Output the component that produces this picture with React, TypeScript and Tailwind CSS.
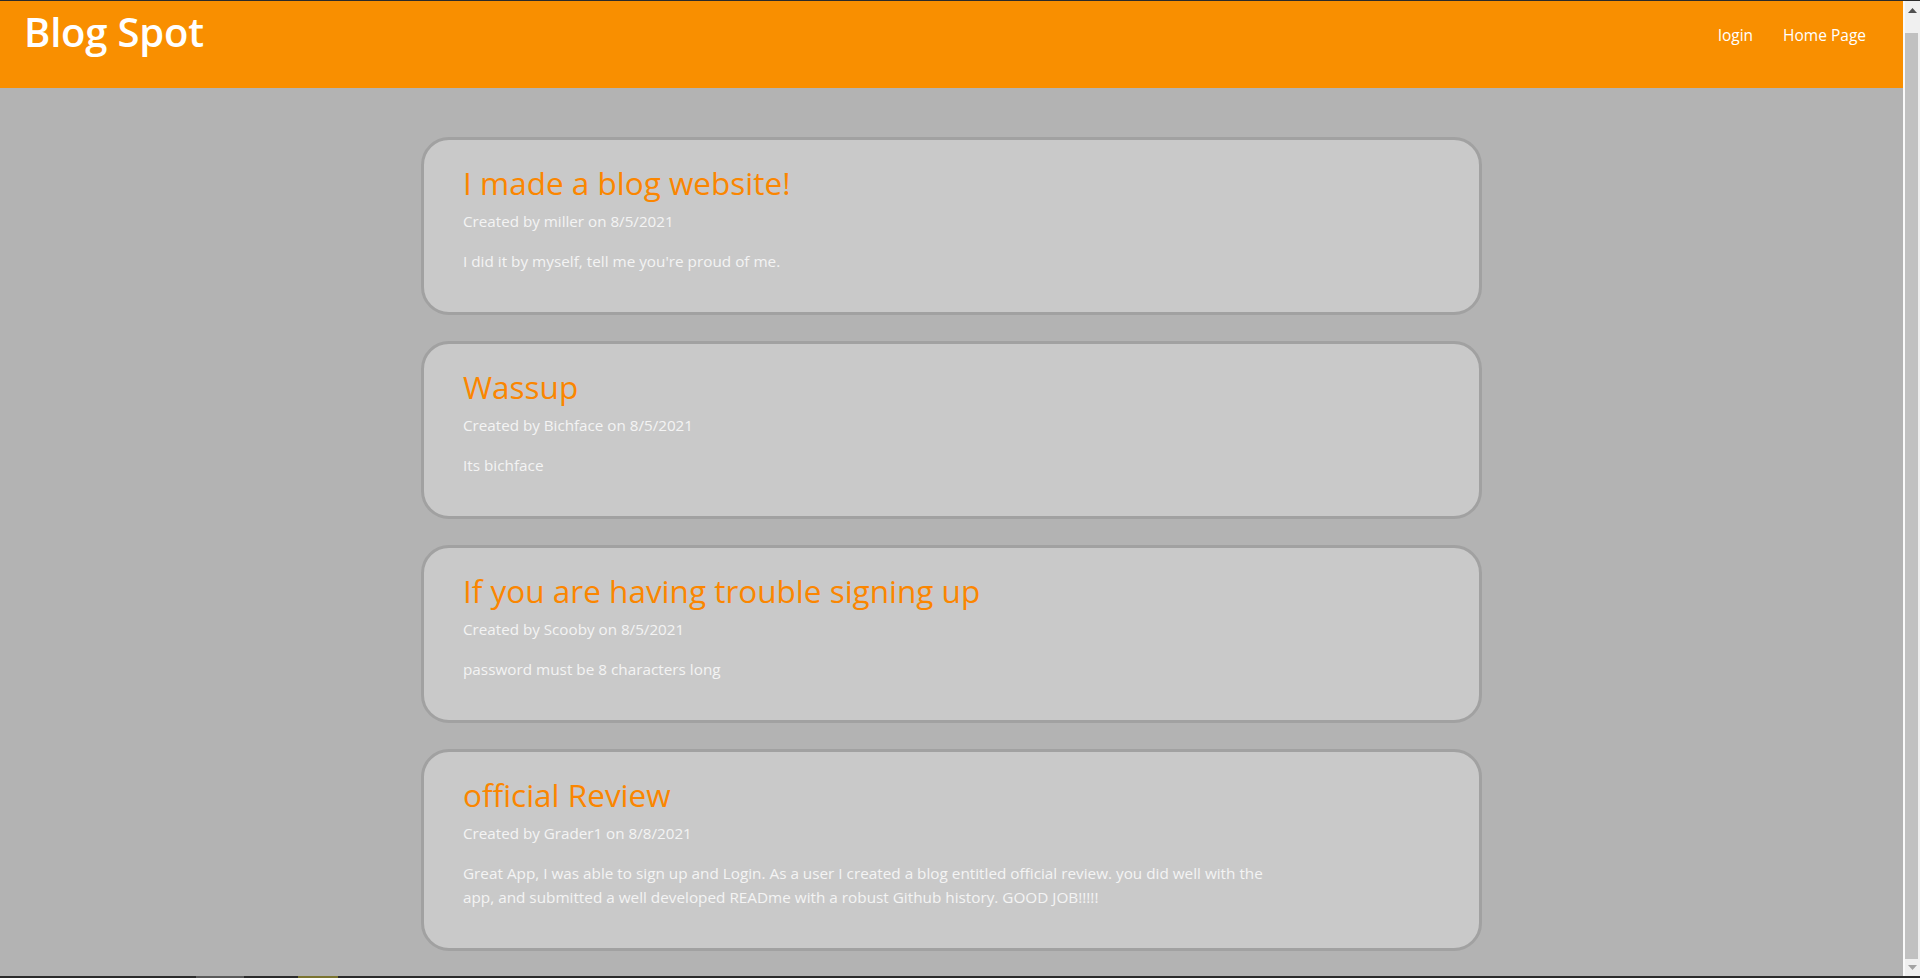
const posts = [
  {
    title: "I made a blog website!",
    author: "miller",
    date: "8/5/2021",
    body: "I did it by myself, tell me you're proud of me.",
  },
  {
    title: "Wassup",
    author: "Bichface",
    date: "8/5/2021",
    body: "Its bichface",
  },
  {
    title: "If you are having trouble signing up",
    author: "Scooby",
    date: "8/5/2021",
    body: "password must be 8 characters long",
  },
  {
    title: "official Review",
    author: "Grader1",
    date: "8/8/2021",
    body: "Great App, I was able to sign up and Login. As a user I created a blog entitled official review. you did well with the app, and submitted a well developed READme with a robust Github history. GOOD JOB!!!!!",
  },
]

function Scrollbar() {
  return (
    <div className="w-[17px] shrink-0 flex flex-col bg-[#f0f0f0] border-l-2 border-[#fafafa]">
      {/* up arrow */}
      <div className="h-[32px] flex justify-center pt-[7px]">
        <svg width="9" height="5" viewBox="0 0 9 5">
          <path d="M0 5 L4.5 0 L9 5 Z" fill="#505050" />
        </svg>
      </div>
      <div className="flex-1 pr-[2px]">
        <div className="h-full bg-[#c1c1c1]" />
      </div>
      {/* down arrow */}
      <div className="h-[17px] flex justify-center pt-[6px]">
        <svg width="9" height="5" viewBox="0 0 9 5">
          <path d="M0 0 L9 0 L4.5 5 Z" fill="#a3a3a3" />
        </svg>
      </div>
    </div>
  )
}

export default function App() {
  return (
    <div
      className="h-[978px] w-full flex flex-col overflow-hidden bg-[#2b2b2b]"
      style={{ fontFamily: "'Open Sans', 'Noto Sans', sans-serif" }}
    >
      <div className="h-px shrink-0 bg-[#2b2b2b]" />

      <div className="flex-1 flex min-h-0">
        <div className="flex-1 flex flex-col bg-[#b3b3b3] overflow-hidden">
          {/* HEADER */}
          <header className="h-[87px] shrink-0 bg-[#f98f00] flex items-start justify-between pl-[24px] pr-[37px]">
            <h1 className="text-[40px] font-semibold text-white leading-none mt-[11px] tracking-[-0.2px]">
              Blog Spot
            </h1>
            <nav className="flex gap-[30px] mt-[23px] text-[15.5px] text-white">
              <a href="#">login</a>
              <a href="#">Home Page</a>
            </nav>
          </header>

          {/* POSTS */}
          <main className="flex flex-col items-center gap-[26px] pt-[49px]">
            {posts.map((post, i) => (
              <article
                key={i}
                className="w-[1061px] rounded-[28px] border-[3px] border-[#a1a1a1] bg-[#c9c9c9] pl-[39px] pr-[40px] pt-[23px] pb-[39px]"
              >
                <h2 className="text-[31.5px] leading-[40px] text-[#fb8600]">
                  {post.title}
                </h2>
                <p className="text-[15.2px] leading-[20px] mt-[8px] text-[#f4f4f4]">
                  Created by {post.author} on {post.date}
                </p>
                <p className="text-[15.3px] leading-[24px] mt-[18px] max-w-[820px] text-[#f4f4f4]">
                  {post.body}
                </p>
              </article>
            ))}
          </main>
        </div>

        <Scrollbar />
      </div>

      {/* bottom edge */}
      <div className="h-[2px] shrink-0 flex">
        <div className="w-[196px] bg-[#2b2b2b]" />
        <div className="w-[48px] bg-[#5a5a5a]" />
        <div className="w-[54px] bg-[#2b2b2b]" />
        <div className="w-[40px] bg-[#7a7330]" />
        <div className="flex-1 bg-[#2b2b2b]" />
      </div>
    </div>
  )
}
